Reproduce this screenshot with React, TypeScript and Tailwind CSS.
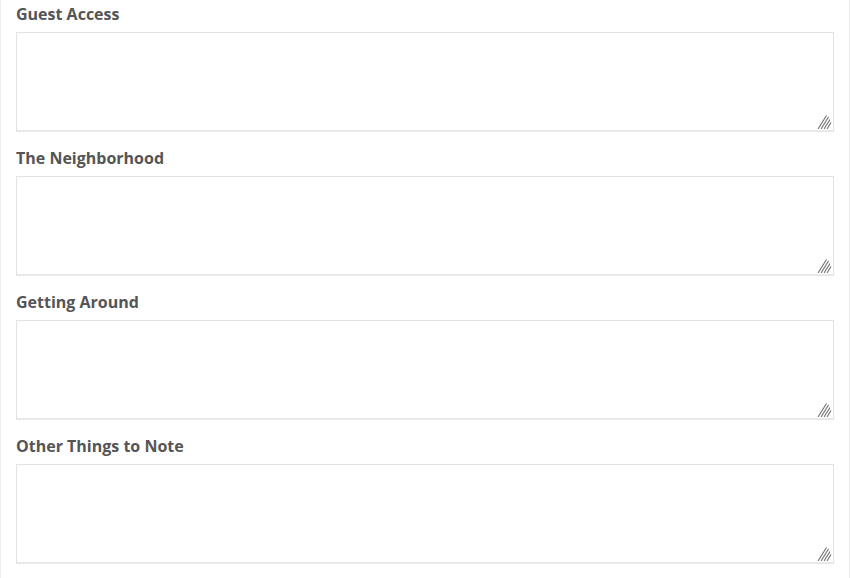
const fields = ['Guest Access', 'The Neighborhood', 'Getting Around', 'Other Things to Note'];

function Grip() {
  return (
    <svg className="absolute right-[2px] bottom-[3px] pointer-events-none" width="15" height="14" viewBox="0 0 15 14">
      <g stroke="#707070" strokeWidth="1.1">
        <line x1="1" y1="14" x2="9.5" y2="0.5" />
        <line x1="4" y1="14" x2="11.5" y2="2" />
        <line x1="7" y1="14" x2="13" y2="4.5" />
        <line x1="10" y1="14" x2="14" y2="7.5" />
      </g>
    </svg>
  );
}

export default function App() {
  return (
    <div
      className="w-[850px] h-[578px] bg-white border-x border-[#ececec] px-[15px] pt-1"
      style={{ fontFamily: '"Open Sans", sans-serif' }}
    >
      {fields.map((name) => (
        <div key={name} className="mb-4">
          <label className="block text-[16px] leading-[21px] font-bold text-[#555] mb-[7px]">{name}</label>
          <div className="relative">
            <textarea className="block w-full h-[100px] resize-none bg-white border border-[#e3e3e3] border-b-2 border-b-[#e6e8eb] outline-none" />
            <Grip />
          </div>
        </div>
      ))}
    </div>
  );
}
